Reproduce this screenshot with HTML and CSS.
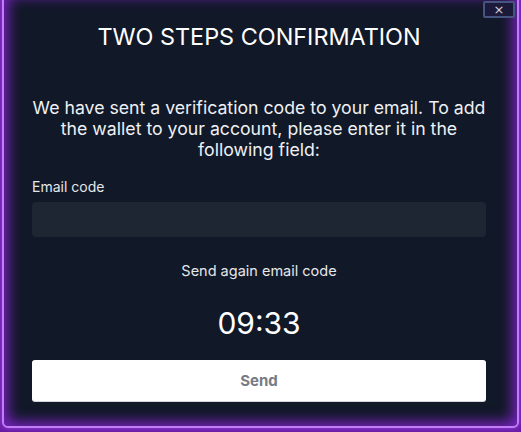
FILE: index.html
```html
<!DOCTYPE html>
<html lang="en">
<head>
<meta charset="utf-8">
<title>Two steps confirmation</title>
<link rel="stylesheet" href="styles.css">
</head>
<body>
<div class="modal">
  <button class="close" type="button">×</button>
  <h1 class="title">TWO STEPS CONFIRMATION</h1>
  <p class="message">We have sent a verification code to your email. To add the wallet to your account, please enter it in the following field:</p>
  <label class="label" for="code">Email code</label>
  <input class="input" id="code" type="text">
  <div class="resend">Send again email code</div>
  <div class="timer">09:33</div>
  <button class="send" type="button">Send</button>
</div>
</body>
</html>
```

FILE: styles.css
```css
html, body {
  margin: 0;
  padding: 0;
}
body {
  height: 432px;
  overflow: hidden;
  background: #6a1ea3;
  font-family: Inter, "Noto Sans", sans-serif;
  color: #f3f4f6;
}
.modal {
  position: relative;
  box-sizing: border-box;
  margin: -10px 2px 0 2px;
  height: 438px;
  border: 2px solid #c07ef5;
  border-radius: 6px;
  background: #111827;
  box-shadow: inset 0 0 14px 4px #7b22c4, 0 0 4px #9d3ee8;
  padding: 29px 31px 0 28px;
  display: flex;
  flex-direction: column;
  text-align: center;
}
.close {
  position: absolute;
  top: 9px;
  right: 2px;
  width: 32px;
  height: 17px;
  box-sizing: border-box;
  border: 2px solid #46557f;
  border-radius: 2px;
  background: #1b1a3a;
  color: #d4d4dc;
  font-family: "DejaVu Sans", sans-serif;
  font-size: 13px;
  line-height: 11px;
  padding: 0;
}
.title {
  margin: 0;
  font-size: 23.4px;
  line-height: 32px;
  font-weight: 400;
  color: #ffffff;
}
.message {
  margin: 44px 0 0 0;
  font-size: 17.7px;
  line-height: 21px;
  color: #eef0f4;
}
.label {
  margin-top: 17px;
  text-align: left;
  font-size: 14px;
  line-height: 20px;
  color: #e5e7eb;
}
.input {
  margin-top: 5px;
  height: 35px;
  box-sizing: border-box;
  border: none;
  border-radius: 4px;
  background: #1f2633;
}
.resend {
  margin-top: 24px;
  font-size: 14.5px;
  line-height: 20px;
  color: #e5e7eb;
}
.timer {
  margin-top: 24px;
  font-size: 30px;
  line-height: 36px;
  font-weight: 400;
  color: #ffffff;
}
.send {
  margin-top: 19px;
  height: 41px;
  border: none;
  border-radius: 3px;
  background: #ffffff;
  box-shadow: 0 1px 0 #d1d5db;
  font-family: Inter, "Noto Sans", sans-serif;
  font-size: 15px;
  font-weight: 700;
  color: #777b83;
}
```
